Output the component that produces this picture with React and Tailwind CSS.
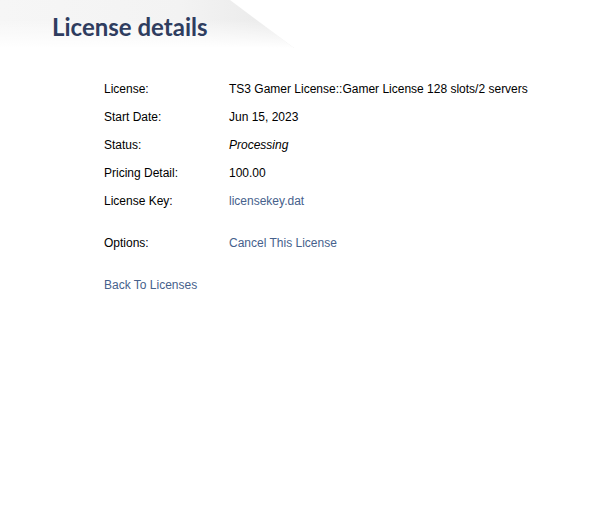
const rows = [
  { label: "License:", value: "TS3 Gamer License::Gamer License 128 slots/2 servers" },
  { label: "Start Date:", value: "Jun 15, 2023" },
  { label: "Status:", value: "Processing", italic: true },
  { label: "Pricing Detail:", value: "100.00" },
  { label: "License Key:", value: "licensekey.dat", link: true },
];

export default function App() {
  return (
    <div className="relative min-h-[522px] bg-white font-['Liberation_Sans',Arial,sans-serif] text-[12px] text-black">
      {/* soft grey tab behind the title */}
      <div className="pointer-events-none absolute left-0 top-0 h-[48px] w-[300px] bg-[linear-gradient(to_bottom,rgba(255,255,255,0)_40%,#ffffff),linear-gradient(to_right,#f6f6f6,#f3f3f3_60%,#ebebeb_88%,#e6e6e6)] [clip-path:polygon(0_0,230px_0,294px_48px,0_48px)]" />

      <div className="relative flex h-[45px] items-start pl-[52px] pt-[12px]">
        <h1 className="font-['Lato',sans-serif] text-[24px] font-bold leading-[30px] text-[#2f3d5f]">
          License details
        </h1>
      </div>

      <div className="relative mt-[30px] pl-[104px]">
        {rows.map((row) => (
          <div key={row.label} className="flex h-7 items-center">
            <div className="w-[125px]">{row.label}</div>
            <div
              className={
                row.link ? "text-[#46618c]" : row.italic ? "italic" : ""
              }
            >
              {row.value}
            </div>
          </div>
        ))}

        <div className="mt-3.5 flex h-7 items-center">
          <div className="w-[125px]">Options:</div>
          <a href="#" className="text-[#46618c]">Cancel This License</a>
        </div>

        <div className="mt-3.5 flex h-7 items-center">
          <a href="#" className="text-[#46618c]">Back To Licenses</a>
        </div>
      </div>
    </div>
  );
}
